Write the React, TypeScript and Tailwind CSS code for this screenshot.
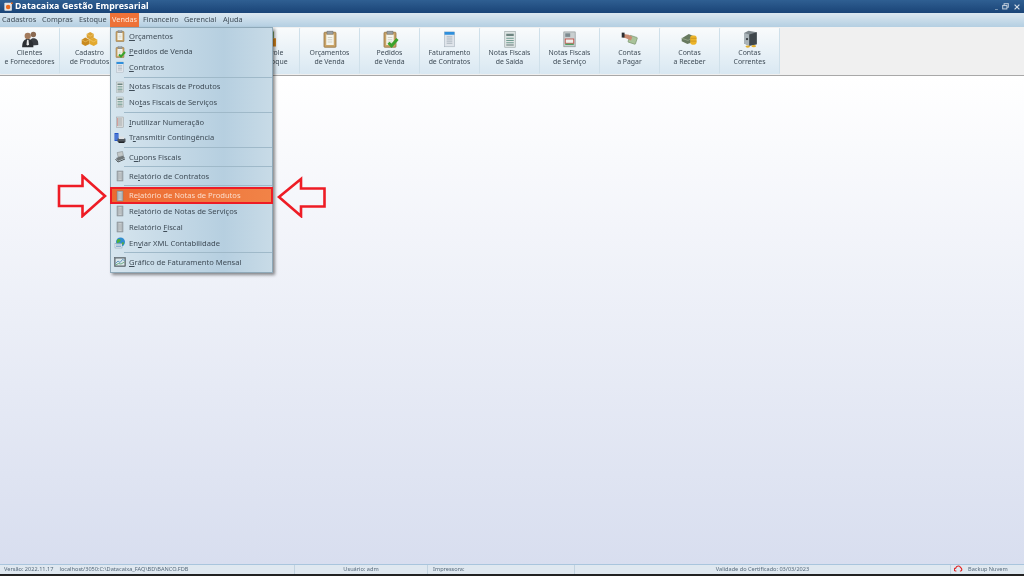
import React from "react";

const Clip = ({ check = false }: { check?: boolean }) => (
  <svg viewBox="0 0 24 24" className="w-full h-full">
    <rect x="4" y="3" width="16" height="20" rx="1" fill="#c9a468" stroke="#8d6f3f" strokeWidth="1" />
    <rect x="7" y="6" width="10" height="14" fill="#f4f5ee" />
    <rect x="8" y="1.5" width="8" height="4" fill="#9aa0a4" stroke="#666" strokeWidth="0.6" />
    <path d="M9 10h6M9 13h6M9 16h6" stroke="#c6c6bc" strokeWidth="1" />
    {check && <path d="M10 17l4 4 8-9" fill="none" stroke="#3aa32c" strokeWidth="4" />}
  </svg>
);
const DocBlue = () => (
  <svg viewBox="0 0 24 24" className="w-full h-full">
    <rect x="5" y="2" width="14" height="21" fill="#dfe4ea" stroke="#9aa7b3" strokeWidth="0.7" />
    <rect x="5" y="2" width="14" height="4" fill="#2f8fdc" />
    <path d="M8 9h8M8 12h8M8 15h8M8 18h8" stroke="#a2adb7" strokeWidth="1.2" />
  </svg>
);
const Note = () => (
  <svg viewBox="0 0 24 24" className="w-full h-full">
    <rect x="5" y="2" width="14" height="21" fill="#dfe5e4" stroke="#939e9e" strokeWidth="0.8" />
    <rect x="7" y="5" width="10" height="3" fill="#6d8480" />
    <path d="M7 11h10M7 14h10M7 17h10" stroke="#6f9a90" strokeWidth="1.5" />
    <rect x="7" y="19" width="10" height="2" fill="#8f9c9c" />
  </svg>
);
const Invoice = () => (
  <svg viewBox="0 0 24 24" className="w-full h-full">
    <rect x="4" y="2" width="16" height="21" fill="#c9cfd0" stroke="#7d8688" strokeWidth="0.8" />
    <rect x="6" y="4" width="7" height="5" fill="#7d8b90" />
    <rect x="6" y="12" width="12" height="6" fill="#eef1ee" stroke="#c0483e" strokeWidth="1.2" />
    <path d="M6 19.5h12" stroke="#3f9a52" strokeWidth="1.6" />
  </svg>
);
const Report = () => (
  <svg viewBox="0 0 24 24" className="w-full h-full">
    <rect x="6" y="2" width="12" height="20" fill="#a9b0b4" stroke="#70787c" strokeWidth="0.8" />
    <rect x="9" y="4" width="6" height="16" fill="#c8cdcf" />
    <path d="M9 8h6M9 12h6M9 16h6" stroke="#888f93" strokeWidth="0.8" />
  </svg>
);
const Inutil = () => (
  <svg viewBox="0 0 24 24" className="w-full h-full">
    <rect x="5" y="2" width="14" height="21" fill="#d6d8d8" stroke="#8a8f92" strokeWidth="0.8" />
    <path d="M8 6h8M8 10h8M8 14h8M8 18h8" stroke="#8f9599" strokeWidth="1.2" />
    <path d="M6 6h2M6 10h2M6 14h2M6 18h2" stroke="#cf4a3f" strokeWidth="1.6" />
  </svg>
);
const Transmit = () => (
  <svg viewBox="0 0 24 24" className="w-full h-full">
    <rect x="1" y="2" width="8" height="16" fill="#2456c8" />
    <path d="M2 6h6M2 10h6M2 14h6" stroke="#a6c2f2" strokeWidth="1.2" />
    <rect x="7" y="13" width="16" height="7" rx="1" fill="#50565c" />
    <rect x="10" y="9" width="10" height="5" fill="#dfe2e4" />
    <rect x="9" y="19" width="12" height="3" fill="#22262a" />
  </svg>
);
const Cupom = () => (
  <svg viewBox="0 0 24 24" className="w-full h-full">
    <path d="M4 14l14-5 4 5-14 6z" fill="#6f7678" />
    <rect x="7" y="2" width="11" height="9" fill="#c3c8c8" stroke="#6f7678" strokeWidth="0.8" transform="rotate(-12 12 6)" />
    <path d="M3 16l5 6 14-6" fill="none" stroke="#4e5558" strokeWidth="2" />
  </svg>
);
const Globe = () => (
  <svg viewBox="0 0 24 24" className="w-full h-full">
    <circle cx="13" cy="10" r="9" fill="#2f8ccf" />
    <path d="M7 5c4-2 7 0 6 3s-5 2-6 5c-2-2-2-5 0-8zM16 11c3-1 4 0 4 1s-2 4-4 4-1-4 0-5z" fill="#4fb03c" />
    <rect x="2" y="13" width="14" height="9" fill="#e8edf0" stroke="#6b8aa5" strokeWidth="0.8" />
    <path d="M4 16h10M4 19h10" stroke="#4c83b4" strokeWidth="1.2" />
  </svg>
);
const ChartIcon = () => (
  <svg viewBox="0 0 24 24" className="w-full h-full">
    <rect x="1" y="3" width="22" height="18" fill="#5f6a70" stroke="#3f474c" strokeWidth="0.8" />
    <rect x="3" y="5" width="18" height="14" fill="#dbe6ea" />
    <path d="M3 15l5-5 4 3 5-6 4 2" fill="none" stroke="#3a7fb0" strokeWidth="1.5" />
    <path d="M3 18l6-3 5 1 7-4" fill="none" stroke="#4c9c6a" strokeWidth="1.5" />
  </svg>
);
const People = () => (
  <svg viewBox="0 0 24 24" className="w-full h-full">
    <circle cx="16.5" cy="6" r="3.6" fill="#8a6a52" />
    <path d="M11 21c0-7 2-10 5.5-10S23 13 23 18v2z" fill="#3a3d42" />
    <circle cx="9" cy="8" r="4.2" fill="#a27a5c" />
    <path d="M1.5 23c0-8 3-11 7.5-11s7.5 3 7.5 11z" fill="#2c2f33" />
    <path d="M8 13h2l.6 6-1.6 2-1.6-2z" fill="#e8e8e8" />
  </svg>
);
const Boxes = () => (
  <svg viewBox="0 0 24 24" className="w-full h-full">
    <path d="M8 5l5-3 5 3v5l-5 3-5-3z" fill="#dca335" />
    <path d="M1 13l5-3 6 3v6l-6 3-5-3z" fill="#c98a1f" />
    <path d="M12 13l6-3 5 3v6l-5 3-6-3z" fill="#e3a92f" />
    <path d="M1 13l5 3 6-3M12 13l6 3 5-3M8 5l5 3 5-3" fill="none" stroke="#f3cf77" strokeWidth="0.8" />
  </svg>
);
const Estoque = () => (
  <svg viewBox="0 0 24 24" className="w-full h-full">
    <rect x="7" y="2" width="10" height="9" fill="#5f8f3a" />
    <path d="M4 11h16v11H4z" fill="#d5851f" />
    <path d="M12 11v11" stroke="#a96210" />
  </svg>
);
const Hand = () => (
  <svg viewBox="0 0 24 24" className="w-full h-full">
    <rect x="11" y="8" width="11" height="10" rx="1" fill="#a9c39a" stroke="#6e8a62" strokeWidth="0.8" transform="rotate(18 16 13)" />
    <path d="M3 5l8 1 5 3-2 5-7-3-4-1z" fill="#c98b72" />
    <rect x="1" y="3" width="4" height="7" fill="#2d3034" />
  </svg>
);
const Coins = () => (
  <svg viewBox="0 0 24 24" className="w-full h-full">
    <path d="M1 11l10-6 7 3v8l-9 3-8-4z" fill="#67795f" />
    <path d="M1 11l9 3 8-6" fill="none" stroke="#97a98d" strokeWidth="1.2" />
    <rect x="13" y="7" width="9" height="13" rx="3" fill="#ecb429" />
    <path d="M13 11h9M13 15h9" stroke="#b9841a" strokeWidth="0.8" />
  </svg>
);
const Safe = () => (
  <svg viewBox="0 0 24 24" className="w-full h-full">
    <path d="M4 4l6-3 11 2v16l-10 2-7-3z" fill="#7e878c" />
    <path d="M4 4l7 2v15l-7-3z" fill="#a9b3b8" />
    <path d="M11 6l10-3v16l-10 2z" fill="#3f474c" />
    <circle cx="8" cy="12" r="1.5" fill="#33393d" />
    <ellipse cx="9" cy="22" rx="3" ry="1.5" fill="#e2ae2c" />
    <ellipse cx="17" cy="21.5" rx="3" ry="1.5" fill="#e2ae2c" />
  </svg>
);

const tools: { a: string; b: string; icon: React.ReactNode; size: string }[] = [
  { a: "Clientes", b: "e Fornecedores", icon: <People />, size: "w-[18px]" },
  { a: "Cadastro", b: "de Produtos", icon: <Boxes />, size: "w-[17px]" },
  { a: "", b: "", icon: null, size: "w-[17px]" },
  { a: "", b: "", icon: null, size: "w-[17px]" },
  { a: "Controle", b: "de Estoque", icon: <Estoque />, size: "w-[18px]" },
  { a: "Orçamentos", b: "de Venda", icon: <Clip />, size: "w-[18px]" },
  { a: "Pedidos", b: "de Venda", icon: <Clip check />, size: "w-[18px]" },
  { a: "Faturamento", b: "de Contratos", icon: <DocBlue />, size: "w-[17px]" },
  { a: "Notas Fiscais", b: "de Saída", icon: <Note />, size: "w-[18px]" },
  { a: "Notas Fiscais", b: "de Serviço", icon: <Invoice />, size: "w-[17px]" },
  { a: "Contas", b: "a Pagar", icon: <Hand />, size: "w-[17px]" },
  { a: "Contas", b: "a Receber", icon: <Coins />, size: "w-[17px]" },
  { a: "Contas", b: "Correntes", icon: <Safe />, size: "w-[18px]" },
];

type Item = { pre: string; u: string; post: string; icon: React.ReactNode; hi?: boolean } | "sep";

const items: Item[] = [
  { pre: "", u: "O", post: "rçamentos", icon: <Clip /> },
  { pre: "", u: "P", post: "edidos de Venda", icon: <Clip check /> },
  { pre: "", u: "C", post: "ontratos", icon: <DocBlue /> },
  "sep",
  { pre: "", u: "N", post: "otas Fiscais de Produtos", icon: <Note /> },
  { pre: "No", u: "t", post: "as Fiscais de Serviços", icon: <Note /> },
  "sep",
  { pre: "", u: "I", post: "nutilizar Numeração", icon: <Inutil /> },
  { pre: "T", u: "r", post: "ansmitir Contingência", icon: <Transmit /> },
  "sep",
  { pre: "C", u: "u", post: "pons Fiscais", icon: <Cupom /> },
  "sep",
  { pre: "Re", u: "l", post: "atório de Contratos", icon: <Report /> },
  "sep",
  { pre: "Re", u: "l", post: "atório de Notas de Produtos", icon: <Report />, hi: true },
  { pre: "Re", u: "l", post: "atório de Notas de Serviços", icon: <Report /> },
  { pre: "Relatório ", u: "F", post: "iscal", icon: <Report /> },
  { pre: "En", u: "v", post: "iar XML Contabilidade", icon: <Globe /> },
  "sep",
  { pre: "", u: "G", post: "ráfico de Faturamento Mensal", icon: <ChartIcon /> },
];

const Arrow = ({ flip = false, className }: { flip?: boolean; className: string }) => (
  <svg viewBox="0 0 50 44" className={className}>
    <path
      d={flip ? "M3 23L25 5v9.500h23.500v18H25V42z" : "M47.500 22L25 2v10H1.500v20H25v10z"}
      fill="none"
      stroke="#ee1c25"
      strokeWidth="2.6"
    />
  </svg>
);

export default function App() {
  return (
    <div className="relative w-[1024px] h-[576px] overflow-hidden flex flex-col bg-black font-['Noto_Sans',sans-serif] text-[7.6px] leading-none text-[#3f4c57] blur-[0.25px]">
      <div className="h-[13px] shrink-0 flex items-center bg-gradient-to-b from-[#2f5f92] to-[#1a4477] text-white">
        <svg viewBox="0 0 12 12" className="w-[9px] h-[9px] ml-[4px] mr-[2px]">
          <rect x="0.5" y="1" width="10" height="10.5" rx="1" fill="#e4e4e4" />
          <circle cx="5.5" cy="6.5" r="3" fill="#e8691f" />
          <circle cx="10.5" cy="1.5" r="1.3" fill="#e8691f" />
        </svg>
        <span className="font-bold text-[8.8px] tracking-[0.1px]">Datacaixa Gestão Empresarial</span>
        <div className="ml-auto flex items-center gap-[4px] mr-[4px] text-[#c3d0dd]">
          <span className="text-[7px] font-bold leading-none">_</span>
          <svg viewBox="0 0 10 10" className="w-[7px] h-[7px]">
            <rect x="3" y="1" width="6" height="5" fill="none" stroke="#c3d0dd" strokeWidth="1.4" />
            <rect x="1" y="3.5" width="6" height="5" fill="#34608f" stroke="#c3d0dd" strokeWidth="1.4" />
          </svg>
          <svg viewBox="0 0 10 10" className="w-[6px] h-[6px] ml-[1px]">
            <path d="M1 1l8 8M9 1l-8 8" stroke="#d3dde7" strokeWidth="2" />
          </svg>
        </div>
      </div>
      <div className="h-[14px] shrink-0 flex items-center pl-[2px] text-[7.3px] bg-gradient-to-b from-[#dbe7f0] to-[#b4cfe2]">
        <span className="w-[40px]">Cadastros</span>
        <span className="w-[37px]">Compras</span>
        <span className="w-[31px]">Estoque</span>
        <span className="w-[29px] h-full flex items-center justify-center bg-[#ee7238] text-[#fde6d6]">Vendas</span>
        <span className="w-[45px] pl-[4px]">Financeiro</span>
        <span className="w-[39px]">Gerencial</span>
        <span>Ajuda</span>
      </div>
      <div className="h-[49px] shrink-0 flex bg-[#f0f0f0] border-b border-[#a8a8a8] pt-[1px] pb-[1px]">
        {tools.map((t, i) => (
          <div
            key={i}
            className="w-[60px] shrink-0 flex flex-col items-center rounded-[1px] border-r border-[#cfe0ea] bg-gradient-to-b from-[#f9fbfc] to-[#d9e8f2] pt-[2px]"
          >
            <div className={`${t.size} h-[18px] flex items-center justify-center`}>{t.icon}</div>
            <div className="text-center text-[6.9px] leading-[9.2px] whitespace-nowrap">
              {t.a}
              <br />
              {t.b}
            </div>
          </div>
        ))}
      </div>
      <div className="flex-1 bg-gradient-to-b from-white to-[#d8deef]" />
      <div className="h-[10px] shrink-0 flex items-center border-t border-[#a9c5dd] bg-[#dfe8f0] text-[5.6px] text-[#56697a]">
        <div className="w-[295px] flex items-center border-r border-[#c2d3e0] h-full pl-[4px] gap-[6px] whitespace-nowrap">
          <span>Versão: 2022.11.17</span>
          <span>localhost/3050:C:\Datacaixa_FAQ\BD\BANCO.FDB</span>
        </div>
        <div className="w-[133px] flex items-center justify-center border-r border-[#c2d3e0] h-full">Usuário: adm</div>
        <div className="w-[147px] flex items-center border-r border-[#c2d3e0] h-full pl-[5px]">Impressora:</div>
        <div className="w-[376px] flex items-center justify-center border-r border-[#c2d3e0] h-full">Validade do Certificado: 03/03/2023</div>
        <div className="flex-1 flex items-center h-full pl-[3px] gap-[5px]">
          <svg viewBox="0 0 12 10" className="w-[9px] h-[7px] -mt-[2px]">
            <path d="M3 8.500H2a2 2 0 0 1 0-4C3 1 8 0 9 4c2 0 2.500 4.500 0 4.500H8" fill="none" stroke="#e02020" strokeWidth="1.600" />
          </svg>
          <span>Backup Nuvem</span>
        </div>
      </div>
      <div className="h-[2px] shrink-0 bg-[#222]" />

      <div className="absolute left-[110px] top-[27px] w-[163px] h-[246px] border border-[#8fa9b9] bg-gradient-to-r from-[#d6e5ee] via-[#b6cfe0] via-70% to-[#c8dbe7] shadow-[2px_2px_3px_rgba(0,0,0,0.45)]">
        {items.map((it, i) =>
          it === "sep" ? (
            <div key={i} className="h-[3.6px] flex items-center pl-[13px]">
              <div className="w-full h-px bg-[#e3edf3] border-t border-[#9fb9c9]" />
            </div>
          ) : (
            <div
              key={i}
              className={`relative h-[15.75px] flex items-center whitespace-nowrap ${it.hi ? "bg-gradient-to-r from-[#ec6a30] to-[#f18347] text-[#fbdcca] outline-[2px] outline-[#ee1c25] -outline-offset-1" : ""}`}
            >
              <div className="w-[12px] h-[12px] ml-[3px] mr-[3px] shrink-0">{it.icon}</div>
              <span className="pt-[1px]">
                {it.pre}
                <u className="underline underline-offset-[1px] decoration-[0.5px]">{it.u}</u>
                {it.post}
              </span>
            </div>
          )
        )}
      </div>

      <Arrow className="absolute left-[57px] top-[174px] w-[51px] h-[44px]" />
      <Arrow flip className="absolute left-[276px] top-[174px] w-[50px] h-[44px]" />
    </div>
  );
}
